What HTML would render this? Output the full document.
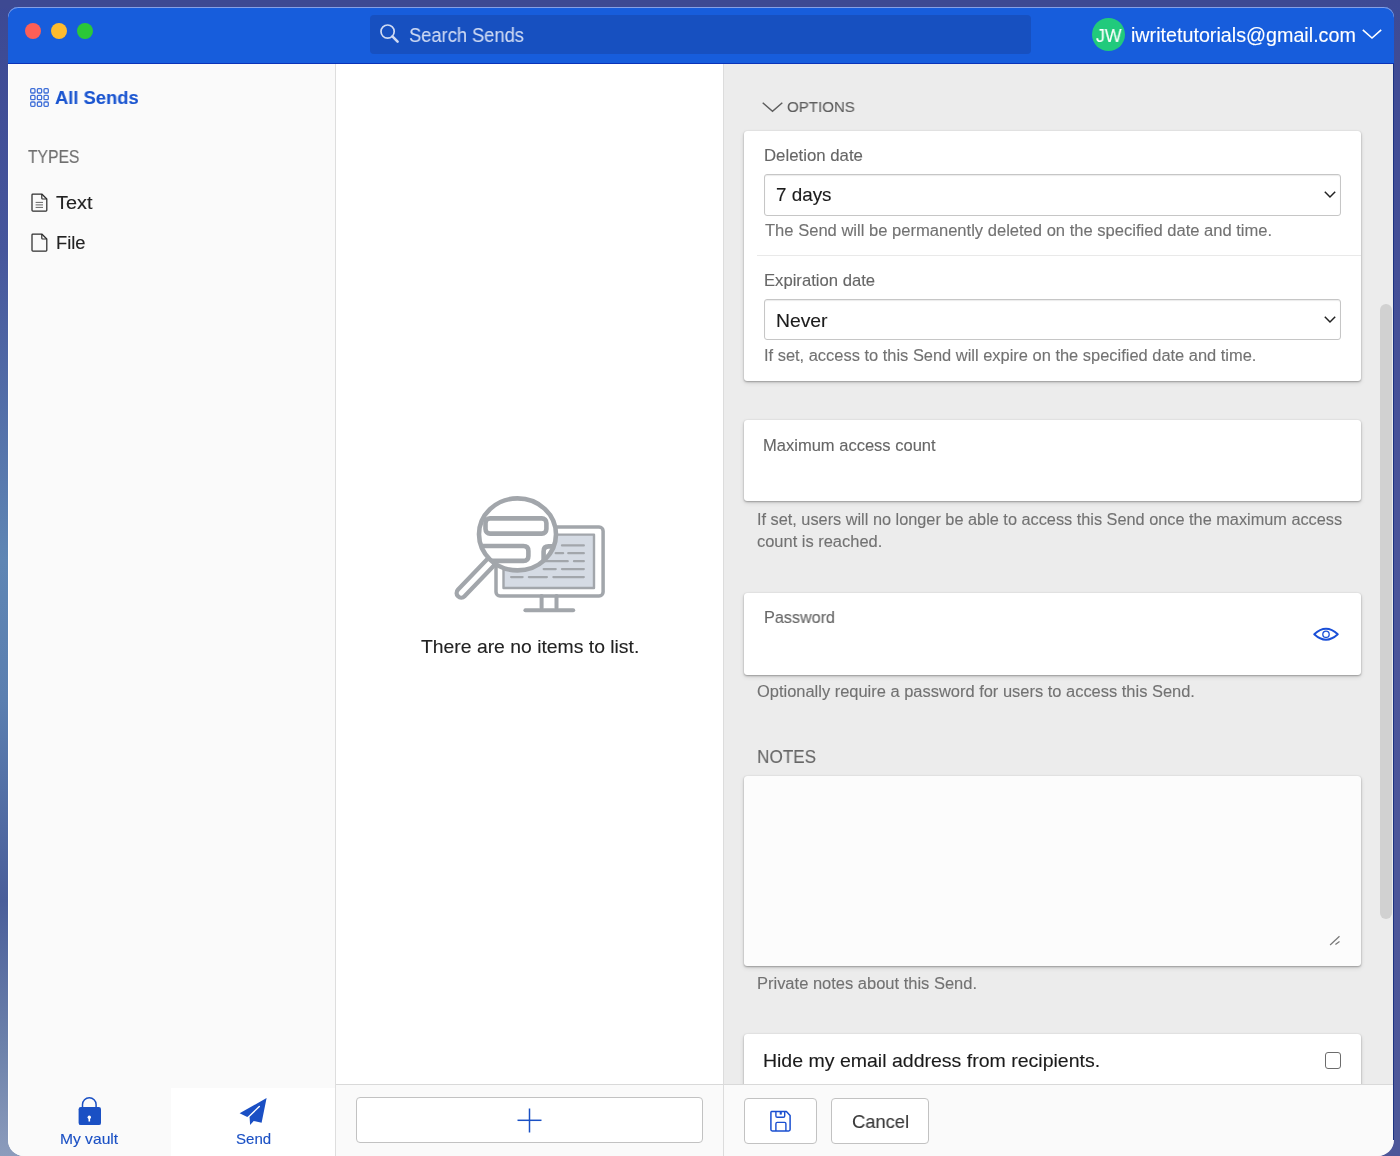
<!DOCTYPE html>
<html><head><meta charset="utf-8">
<style>
html,body{margin:0;padding:0;width:1400px;height:1156px;overflow:hidden;}
body{position:relative;font-family:"Liberation Sans",sans-serif;
 background:linear-gradient(180deg,#3c4893 0px,#46569c 250px,#5f86b4 560px,#5b7fb0 700px,#4a5e9a 900px,#6d82ab 1050px,#8c9cbc 1156px);}
.a{position:absolute;box-sizing:border-box;}
.t{position:absolute;white-space:nowrap;font-family:"Liberation Sans",sans-serif;-webkit-text-stroke:0.12px currentColor;will-change:transform;}
.box{position:absolute;box-sizing:border-box;background:#fff;border-radius:3px;box-shadow:0 1px 2px rgba(0,0,0,.30),0 2px 5px rgba(0,0,0,.10),0 0 1px rgba(0,0,0,.15);}
svg{position:absolute;overflow:visible;}
</style></head><body>
<!-- top purple strip -->
<div class="a" style="left:0;top:0;width:1400px;height:8px;background:#3d4992;"></div>
<div class="a" style="left:1360px;top:0;width:40px;height:1156px;background:linear-gradient(180deg,#3e4a94,#4b559b 600px,#4d5799);"></div>

<!-- window -->
<div class="a" style="left:8px;top:7px;width:1386px;height:1149px;border-radius:10px 10px 16px 16px;overflow:hidden;background:#fafafa;">
  <!-- header -->
  <div class="a" style="left:0;top:0;width:1386px;height:57px;background:#175ddc;border-bottom:1px solid #0b33b8;"></div>
  <div class="a" style="left:0;top:0;width:1386px;height:30px;border-radius:10px 10px 0 0;box-shadow:inset 0 1px 0 #85a0e6;"></div>
</div>
<!-- window right dark edge -->
<div class="a" style="left:1393px;top:64px;width:1px;height:1076px;background:#1c3381;"></div>

<!-- traffic lights -->
<div class="a" style="left:25px;top:23px;width:16px;height:16px;border-radius:50%;background:#fd5f57;"></div>
<div class="a" style="left:51px;top:23px;width:16px;height:16px;border-radius:50%;background:#febb2e;"></div>
<div class="a" style="left:77.4px;top:23px;width:16px;height:16px;border-radius:50%;background:#2bc838;"></div>

<!-- search box -->
<div class="a" style="left:370px;top:15px;width:661px;height:39px;border-radius:4px;background:#1750c0;"></div>
<svg style="left:380px;top:24px" width="20" height="20" viewBox="0 0 20 20">
  <circle cx="7.6" cy="7.6" r="6.6" fill="none" stroke="#cfdaf3" stroke-width="1.7"/>
  <line x1="12.4" y1="12.4" x2="17.6" y2="17.6" stroke="#cfdaf3" stroke-width="2.6" stroke-linecap="round"/>
</svg>

<!-- avatar -->
<div class="a" style="left:1092px;top:18.3px;width:33px;height:33px;border-radius:50%;background:#21ca7c;"></div>
<!-- email chevron -->
<svg style="left:1362px;top:29px" width="20" height="10" viewBox="0 0 20 10">
  <polyline points="0.8,0.8 10,9 19.2,0.8" fill="none" stroke="#fff" stroke-width="1.6"/>
</svg>

<!-- sidebar -->
<div class="a" style="left:8px;top:64px;width:328px;height:1092px;background:#fafafa;border-right:1px solid #dedede;border-bottom-left-radius:16px;"></div>
<div class="a" style="left:8px;top:64px;width:1px;height:1076px;background:#ffffff;"></div>
<!-- grid icon -->
<svg style="left:30px;top:88px" width="19" height="19" viewBox="0 0 19 19">
  <g fill="none" stroke="#3f6fd8" stroke-width="1.3">
    <rect x="0.7" y="0.7" width="4.3" height="4.3" rx="1"/><rect x="7.35" y="0.7" width="4.3" height="4.3" rx="1"/><rect x="14" y="0.7" width="4.3" height="4.3" rx="1"/>
    <rect x="0.7" y="7.35" width="4.3" height="4.3" rx="1"/><rect x="7.35" y="7.35" width="4.3" height="4.3" rx="1"/><rect x="14" y="7.35" width="4.3" height="4.3" rx="1"/>
    <rect x="0.7" y="14" width="4.3" height="4.3" rx="1"/><rect x="7.35" y="14" width="4.3" height="4.3" rx="1"/><rect x="14" y="14" width="4.3" height="4.3" rx="1"/>
  </g>
</svg>
<!-- text doc icon -->
<svg style="left:31px;top:193px" width="17" height="19" viewBox="0 0 17 19">
  <path d="M1.9,1 H10.8 L15.8,6 V17.2 Q15.8,18 15,18 H1.9 Q1,18 1,17.2 V1.8 Q1,1 1.9,1 Z" fill="none" stroke="#2e2e2e" stroke-width="1.25" stroke-linejoin="round"/>
  <path d="M10.8,1 V5.2 Q10.8,6 11.6,6 H15.8" fill="none" stroke="#2e2e2e" stroke-width="1.2"/>
  <line x1="4.6" y1="9.4" x2="12" y2="9.4" stroke="#666" stroke-width="1"/>
  <line x1="4.6" y1="11.9" x2="12" y2="11.9" stroke="#666" stroke-width="1"/>
  <line x1="4.6" y1="14.4" x2="12" y2="14.4" stroke="#666" stroke-width="1"/>
</svg>
<!-- file icon -->
<svg style="left:31px;top:233px" width="17" height="19" viewBox="0 0 17 19">
  <path d="M1.9,1 H10.8 L15.8,6 V17.2 Q15.8,18 15,18 H1.9 Q1,18 1,17.2 V1.8 Q1,1 1.9,1 Z" fill="none" stroke="#2e2e2e" stroke-width="1.25" stroke-linejoin="round"/>
  <path d="M10.8,1 V5.2 Q10.8,6 11.6,6 H15.8" fill="none" stroke="#2e2e2e" stroke-width="1.2"/>
</svg>

<!-- bottom nav -->
<div class="a" style="left:171px;top:1088px;width:164px;height:68px;background:#ffffff;"></div>
<!-- lock -->
<svg style="left:78px;top:1097px" width="24" height="29" viewBox="0 0 24 29">
  <path d="M4.5,11 V7.6 A6.8,6.8 0 0 1 18.1,7.6 V11" fill="none" stroke="#1a50c4" stroke-width="1.5"/>
  <rect x="0.6" y="10.1" width="22.4" height="18" rx="2.2" fill="#1a50c4"/>
  <circle cx="11.3" cy="20.3" r="1.7" fill="#fff"/>
  <rect x="10.5" y="20.5" width="1.6" height="4" fill="#fff"/>
</svg>
<!-- paper plane -->
<svg style="left:239px;top:1097px" width="29" height="29" viewBox="0 0 29 29">
  <path d="M27.6,1.1 L0.6,16.2 L7.8,19.7 L10.6,20.3 L11.1,27.9 L14.7,24 L22.6,25.8 Z" fill="#1a4fc4"/>
  <line x1="20.3" y1="9.5" x2="8.4" y2="21" stroke="#fff" stroke-width="1.4" stroke-linecap="round"/>
</svg>

<!-- middle panel -->
<div class="a" style="left:336px;top:64px;width:388px;height:1020px;background:#ffffff;border-right:1px solid #dcdcdc;"></div>
<div class="a" style="left:336px;top:1084px;width:388px;height:72px;background:#fafafa;border-top:1px solid #d9d9d9;border-right:1px solid #dcdcdc;"></div>
<div class="a" style="left:356px;top:1097px;width:347px;height:46px;background:#ffffff;border:1px solid #c2c2c2;border-radius:4px;"></div>
<svg style="left:517px;top:1108px" width="25" height="25" viewBox="0 0 25 25">
  <line x1="12.5" y1="0.5" x2="12.5" y2="24.5" stroke="#1a50c4" stroke-width="1.5"/>
  <line x1="0.5" y1="12.3" x2="24.5" y2="12.3" stroke="#1a50c4" stroke-width="1.5"/>
</svg>

<!-- empty illustration -->
<svg style="left:450px;top:490px" width="160" height="130" viewBox="0 0 160 130">
  <defs><clipPath id="lensclip"><ellipse cx="67.5" cy="44.35" rx="38.5" ry="36"/></clipPath></defs>
  <g fill="none" stroke="#a2a6ab" stroke-linecap="round" stroke-linejoin="round">
    <rect x="46" y="37.1" width="107.1" height="68.8" rx="4" stroke-width="3.5" fill="#fff"/>
    <rect x="53.5" y="44.6" width="90.5" height="53.4" stroke-width="2.4" fill="#d5dbe4"/>
    <g stroke-width="2.3">
      <line x1="112" y1="55.4" x2="133.8" y2="55.4"/>
      <line x1="105.7" y1="63.2" x2="113.1" y2="63.2"/><line x1="118.3" y1="63.2" x2="133.8" y2="63.2"/>
      <line x1="95" y1="71.2" x2="117.7" y2="71.2"/><line x1="124" y1="71.2" x2="133.8" y2="71.2"/>
      <line x1="93.7" y1="79.1" x2="105.7" y2="79.1"/><line x1="112" y1="79.1" x2="133.8" y2="79.1"/>
      <line x1="61.1" y1="87.1" x2="72.6" y2="87.1"/><line x1="78.9" y1="87.1" x2="96.9" y2="87.1"/><line x1="103.4" y1="87.1" x2="133.8" y2="87.1"/>
    </g>
    <line x1="91.6" y1="106" x2="91.6" y2="118" stroke-width="4"/>
    <line x1="106.5" y1="106" x2="106.5" y2="118" stroke-width="4"/>
    <line x1="75.4" y1="120.2" x2="123.2" y2="120.2" stroke-width="4"/>
    <!-- handle -->
    <line x1="40" y1="73" x2="11.2" y2="103" stroke-width="13.4"/>
    <line x1="40" y1="73" x2="11.2" y2="103" stroke-width="5" stroke="#fff"/>
    <!-- lens -->
    <ellipse cx="67.5" cy="44.35" rx="38.5" ry="36" stroke-width="4.6" fill="#fff"/>
    <g clip-path="url(#lensclip)">
      <rect x="35.5" y="28.4" width="60.9" height="15.2" rx="4.5" stroke-width="4.6"/>
      <path d="M20,56 H73.4 Q78.4,56 78.4,61 V65.9 Q78.4,70.9 73.4,70.9 H20" stroke-width="4.6"/>
      <path d="M93.6,90 V61.4 Q93.6,56.4 98.6,56.4 H115" stroke-width="4.6"/>
    </g>
  </g>
</svg>

<!-- right panel -->
<div class="a" style="left:724px;top:64px;width:669px;height:1020px;background:#ececec;"></div>
<div class="a" style="left:1380px;top:304px;width:12px;height:615px;border-radius:6px;background:#d1d1d1;"></div>
<!-- options chevron -->
<svg style="left:762px;top:101.5px" width="21" height="10" viewBox="0 0 21 10">
  <polyline points="0.7,0.7 10.5,9.3 20.3,0.7" fill="none" stroke="#5e5e5e" stroke-width="1.5"/>
</svg>

<!-- box 1 -->
<div class="box" style="left:744px;top:130.5px;width:617px;height:250px;"></div>
<div class="a" style="left:764px;top:174px;width:577px;height:41.5px;border:1px solid #c6c6c6;border-radius:3px;background:#fff;box-shadow:inset 0 1px 1px rgba(0,0,0,.08);"></div>
<svg style="left:1324px;top:191px" width="12" height="7" viewBox="0 0 12 7">
  <polyline points="0.8,0.8 6,6 11.2,0.8" fill="none" stroke="#222" stroke-width="1.5"/>
</svg>
<div class="a" style="left:757px;top:255px;width:604px;height:1px;background:#e9e9e9;"></div>
<div class="a" style="left:764px;top:298.7px;width:577px;height:41.5px;border:1px solid #c6c6c6;border-radius:3px;background:#fff;box-shadow:inset 0 1px 1px rgba(0,0,0,.08);"></div>
<svg style="left:1324px;top:316px" width="12" height="7" viewBox="0 0 12 7">
  <polyline points="0.8,0.8 6,6 11.2,0.8" fill="none" stroke="#222" stroke-width="1.5"/>
</svg>

<!-- box 2 -->
<div class="box" style="left:744px;top:420.2px;width:617px;height:81.3px;"></div>
<!-- box 3 -->
<div class="box" style="left:744px;top:593px;width:617px;height:81.5px;"></div>
<svg style="left:1313px;top:627px" width="26" height="15" viewBox="0 0 26 15">
  <path d="M1.2,7.3 Q13,-3.6 24.8,7.3 Q13,18.2 1.2,7.3 Z" fill="none" stroke="#1a4fd8" stroke-width="1.9" stroke-linejoin="round"/>
  <circle cx="13" cy="7.3" r="3.2" fill="none" stroke="#1a4fd8" stroke-width="1.3"/>
</svg>

<!-- notes box -->
<div class="box" style="left:744px;top:776px;width:617px;height:189.7px;background:#fcfcfc;"></div>
<svg style="left:1329px;top:935px" width="12" height="11" viewBox="0 0 12 11">
  <line x1="1.1" y1="10" x2="10.5" y2="1.3" stroke="#777" stroke-width="1.2"/>
  <line x1="6.4" y1="9.6" x2="10.5" y2="6.5" stroke="#777" stroke-width="1.2"/>
</svg>

<!-- hide email box -->
<div class="box" style="left:744px;top:1034.4px;width:617px;height:70px;"></div>
<div class="a" style="left:1324.5px;top:1052px;width:16.5px;height:16.5px;border:1.5px solid #6c6c6c;border-radius:3px;background:#fff;"></div>

<!-- right footer -->
<div class="a" style="left:724px;top:1084px;width:669px;height:72px;background:#fafafa;border-top:1px solid #d9d9d9;border-bottom-right-radius:16px;"></div>
<div class="a" style="left:744px;top:1097.5px;width:73px;height:46px;background:#ffffff;border:1px solid #c2c2c2;border-radius:4px;"></div>
<svg style="left:769px;top:1110px" width="23" height="23" viewBox="0 0 23 23">
  <path d="M2.7,1.6 H17.4 L21.1,5.5 V19.6 Q21.1,21 19.7,21 H3.3 Q1.9,21 1.9,19.6 V2.9 Q1.9,1.6 2.7,1.6 Z" fill="none" stroke="#1a4fd0" stroke-width="1.5" stroke-linejoin="round"/>
  <path d="M6.9,1.6 V6 Q6.9,7.3 8.2,7.3 H14.4 Q15.7,7.3 15.7,6 V1.6" fill="none" stroke="#1a4fd0" stroke-width="1.4"/>
  <rect x="10.7" y="1.8" width="2.1" height="2.8" fill="#1a4fd0"/>
  <path d="M6.9,21 V13.7 Q6.9,12.4 8.2,12.4 H15.6 Q16.9,12.4 16.9,13.7 V21" fill="none" stroke="#1a4fd0" stroke-width="1.4"/>
</svg>
<div class="a" style="left:831px;top:1097.5px;width:97.5px;height:46px;background:#ffffff;border:1px solid #c2c2c2;border-radius:4px;"></div>

<div class="t" style="left:408.70px;top:26.30px;font-size:19.6px;line-height:19.6px;color:#cfdaf3;transform:scaleX(0.9328);transform-origin:1px 0;">Search Sends</div>
<div class="t" style="left:1096.00px;top:25.70px;font-size:19px;line-height:19px;color:#ffffff;transform:scaleX(0.9333);transform-origin:0px 0;">JW</div>
<div class="t" style="left:1131.00px;top:26.00px;font-size:19.5px;line-height:19.5px;color:#ffffff;transform:scaleX(1.0109);transform-origin:1px 0;">iwritetutorials@gmail.com</div>
<div class="t" style="left:55.00px;top:89.00px;font-size:18.8px;line-height:18.8px;color:#1a55d0;font-weight:700;transform:scaleX(0.9762);transform-origin:1px 0;">All Sends</div>
<div class="t" style="left:28.10px;top:148.40px;font-size:18.6px;line-height:18.6px;color:#6f6f6f;transform:scaleX(0.8433);transform-origin:0px 0;">TYPES</div>
<div class="t" style="left:55.80px;top:194.00px;font-size:18px;line-height:18px;color:#222222;transform:scaleX(1.1030);transform-origin:0px 0;">Text</div>
<div class="t" style="left:55.90px;top:233.80px;font-size:18px;line-height:18px;color:#222222;transform:scaleX(1.0185);transform-origin:1px 0;">File</div>
<div class="t" style="left:60.40px;top:1131.60px;font-size:14.6px;line-height:14.6px;color:#1a50c4;transform:scaleX(1.0717);transform-origin:1px 0;">My vault</div>
<div class="t" style="left:235.50px;top:1131.60px;font-size:14.6px;line-height:14.6px;color:#1a50c4;transform:scaleX(1.0312);transform-origin:1px 0;">Send</div>
<div class="t" style="left:421.10px;top:637.10px;font-size:19px;line-height:19px;color:#222222;transform:scaleX(1.0183);transform-origin:0px 0;">There are no items to list.</div>
<div class="t" style="left:787.00px;top:98.80px;font-size:15.4px;line-height:15.4px;color:#5e5e5e;transform:scaleX(0.9779);transform-origin:1px 0;">OPTIONS</div>
<div class="t" style="left:763.50px;top:146.50px;font-size:16.4px;line-height:16.4px;color:#666666;transform:scaleX(1.0242);transform-origin:1px 0;">Deletion date</div>
<div class="t" style="left:776.00px;top:186.30px;font-size:18.5px;line-height:18.5px;color:#1b1b1b;transform:scaleX(1.0189);transform-origin:1px 0;">7 days</div>
<div class="t" style="left:764.50px;top:223.30px;font-size:16.0px;line-height:16.0px;color:#727272;transform:scaleX(1.0348);transform-origin:0px 0;">The Send will be permanently deleted on the specified date and time.</div>
<div class="t" style="left:763.80px;top:272.00px;font-size:16.4px;line-height:16.4px;color:#666666;transform:scaleX(1.0157);transform-origin:1px 0;">Expiration date</div>
<div class="t" style="left:776.40px;top:311.60px;font-size:18.5px;line-height:18.5px;color:#1b1b1b;transform:scaleX(1.0458);transform-origin:1px 0;">Never</div>
<div class="t" style="left:763.50px;top:348.20px;font-size:16.0px;line-height:16.0px;color:#727272;transform:scaleX(1.0273);transform-origin:1px 0;">If set, access to this Send will expire on the specified date and time.</div>
<div class="t" style="left:763.10px;top:436.60px;font-size:16.4px;line-height:16.4px;color:#666666;transform:scaleX(1.0082);transform-origin:1px 0;">Maximum access count</div>
<div class="t" style="left:756.80px;top:512.30px;font-size:16.0px;line-height:16.0px;color:#727272;transform:scaleX(1.0185);transform-origin:1px 0;">If set, users will no longer be able to access this Send once the maximum access</div>
<div class="t" style="left:756.80px;top:534.20px;font-size:16.0px;line-height:16.0px;color:#727272;transform:scaleX(1.0283);transform-origin:1px 0;">count is reached.</div>
<div class="t" style="left:763.50px;top:608.80px;font-size:16.4px;line-height:16.4px;color:#666666;transform:scaleX(0.9871);transform-origin:1px 0;">Password</div>
<div class="t" style="left:756.80px;top:684.30px;font-size:16.0px;line-height:16.0px;color:#727272;transform:scaleX(1.0281);transform-origin:1px 0;">Optionally require a password for users to access this Send.</div>
<div class="t" style="left:757.00px;top:748.00px;font-size:18.6px;line-height:18.6px;color:#666666;transform:scaleX(0.9194);transform-origin:1px 0;">NOTES</div>
<div class="t" style="left:756.50px;top:975.50px;font-size:16.0px;line-height:16.0px;color:#727272;transform:scaleX(1.0308);transform-origin:1px 0;">Private notes about this Send.</div>
<div class="t" style="left:763.30px;top:1052.40px;font-size:18.5px;line-height:18.5px;color:#1b1b1b;transform:scaleX(1.0546);transform-origin:1px 0;">Hide my email address from recipients.</div>
<div class="t" style="left:851.50px;top:1111.70px;font-size:19px;line-height:19px;color:#383838;transform:scaleX(0.9649);transform-origin:1px 0;">Cancel</div>
</body></html>
